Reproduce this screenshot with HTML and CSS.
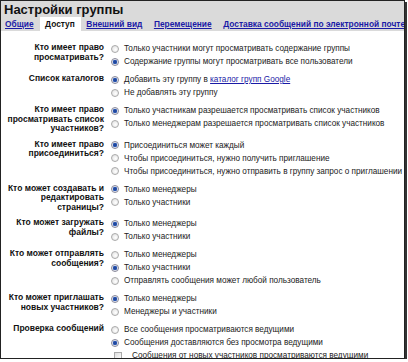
FILE: index.html
```html
<!DOCTYPE html>
<html lang="ru">
<head>
    <meta charset="UTF-8">
    <title>Настройки группы</title>
    <link rel="stylesheet" href="styles.css">
</head>
<body>
<div class="panel">
    <div class="header">
        <h1>Настройки группы</h1>
        <div class="tabs">
            <a href="#" class="tab">Общие</a>
            <span class="tab active">Доступ</span>
            <a href="#" class="tab">Внешний вид</a>
            <a href="#" class="tab">Перемещение</a>
            <a href="#" class="tab">Доставка сообщений по электронной почте</a>
        </div>
    </div>

    <div class="settings">
        <div class="label">Кто имеет право<br>просматривать?</div>
        <div class="options">
            <div class="opt"><span class="radio"></span>Только участники могут просматривать содержание группы</div>
            <div class="opt"><span class="radio on"></span>Содержание группы могут просматривать все пользователи</div>
        </div>

        <div class="label">Список каталогов</div>
        <div class="options">
            <div class="opt"><span class="radio on"></span>Добавить эту группу в&nbsp;<a href="#">каталог групп Google</a></div>
            <div class="opt"><span class="radio"></span>Не добавлять эту группу</div>
        </div>

        <div class="label">Кто имеет право<br>просматривать список<br>участников?</div>
        <div class="options">
            <div class="opt"><span class="radio on"></span>Только участникам разрешается просматривать список участников</div>
            <div class="opt"><span class="radio"></span>Только менеджерам разрешается просматривать список участников</div>
        </div>

        <div class="label">Кто имеет право<br>присоединиться?</div>
        <div class="options">
            <div class="opt"><span class="radio on"></span>Присоединиться может каждый</div>
            <div class="opt"><span class="radio"></span>Чтобы присоединиться, нужно получить приглашение</div>
            <div class="opt"><span class="radio"></span>Чтобы присоединиться, нужно отправить в группу запрос о приглашении</div>
        </div>

        <div class="label">Кто может создавать и<br>редактировать<br>страницы?</div>
        <div class="options">
            <div class="opt"><span class="radio on"></span>Только менеджеры</div>
            <div class="opt"><span class="radio"></span>Только участники</div>
        </div>

        <div class="label">Кто может загружать<br>файлы?</div>
        <div class="options">
            <div class="opt"><span class="radio on"></span>Только менеджеры</div>
            <div class="opt"><span class="radio"></span>Только участники</div>
        </div>

        <div class="label">Кто может отправлять<br>сообщения?</div>
        <div class="options">
            <div class="opt"><span class="radio"></span>Только менеджеры</div>
            <div class="opt"><span class="radio on"></span>Только участники</div>
            <div class="opt"><span class="radio"></span>Отправлять сообщения может любой пользователь</div>
        </div>

        <div class="label">Кто может приглашать<br>новых участников?</div>
        <div class="options">
            <div class="opt"><span class="radio on"></span>Только менеджеры</div>
            <div class="opt"><span class="radio"></span>Менеджеры и участники</div>
        </div>

        <div class="label">Проверка сообщений</div>
        <div class="options">
            <div class="opt"><span class="radio"></span>Все сообщения просматриваются ведущими</div>
            <div class="opt"><span class="radio on"></span>Сообщения доставляются без просмотра ведущими</div>
            <div class="opt sub"><span class="check"></span>Сообщения от новых участников просматриваются ведущими</div>
        </div>
    </div>
</div>
</body>
</html>
```

FILE: styles.css
```css
body {
    margin: 0;
    font-family: "Liberation Sans", Arial, sans-serif;
    color: #222;
    background-color: #fff;
}

.panel {
    width: 405px;
    height: 359px;
    box-sizing: border-box;
    border: 1px solid #222;
    box-shadow: 2px 2px 0 #333;
    background-color: #fff;
    overflow: hidden;
}

.header {
    background-color: #dadada;
    padding: 2px 0 0 3px;
}

h1 {
    margin: 0;
    font-size: 13px;
    line-height: 14px;
    font-weight: bold;
    color: #111;
}

.tabs {
    display: flex;
    align-items: flex-end;
    gap: 11.5px;
    padding-left: 1px;
    white-space: nowrap;
    height: 14px;
}

.tab {
    font-size: 8.4px;
    font-weight: bold;
    line-height: 14px;
    color: #1a1aa6;
    text-decoration: underline;
}

.tab.active {
    background-color: #fff;
    color: #111;
    text-decoration: none;
    padding: 0 6px 0 5px;
    margin: 0 -6px 0 -5px;
}

.settings {
    display: grid;
    grid-template-columns: 103px 1fr;
    column-gap: 7px;
    row-gap: 5px;
    padding-top: 11px;
}

.label {
    text-align: right;
    font-size: 8.5px;
    font-weight: bold;
    line-height: 9.5px;
    padding-top: 1px;
    color: #111;
}

.options {
    display: flex;
    flex-direction: column;
}

.opt {
    display: flex;
    align-items: center;
    font-size: 8.2px;
    line-height: 13px;
    white-space: nowrap;
    color: #222;
}

.opt a {
    color: #1a1aa6;
}

.opt.sub {
    padding-left: 3px;
}

.radio {
    width: 6px;
    height: 6px;
    border: 1px solid #aaa;
    border-radius: 50%;
    background: radial-gradient(circle at 60% 60%, #fff, #ddd);
    margin-right: 5px;
    flex-shrink: 0;
}

.radio.on {
    background: radial-gradient(circle at 50% 50%, #1c3b8a 0, #2c5bb8 45%, #e0e4ee 60%, #fff 100%);
    border-color: #889;
}

.check {
    width: 6px;
    height: 6px;
    border: 1px solid #aaa;
    background: linear-gradient(135deg, #ddd, #fff);
    margin-right: 10px;
    flex-shrink: 0;
}
```
